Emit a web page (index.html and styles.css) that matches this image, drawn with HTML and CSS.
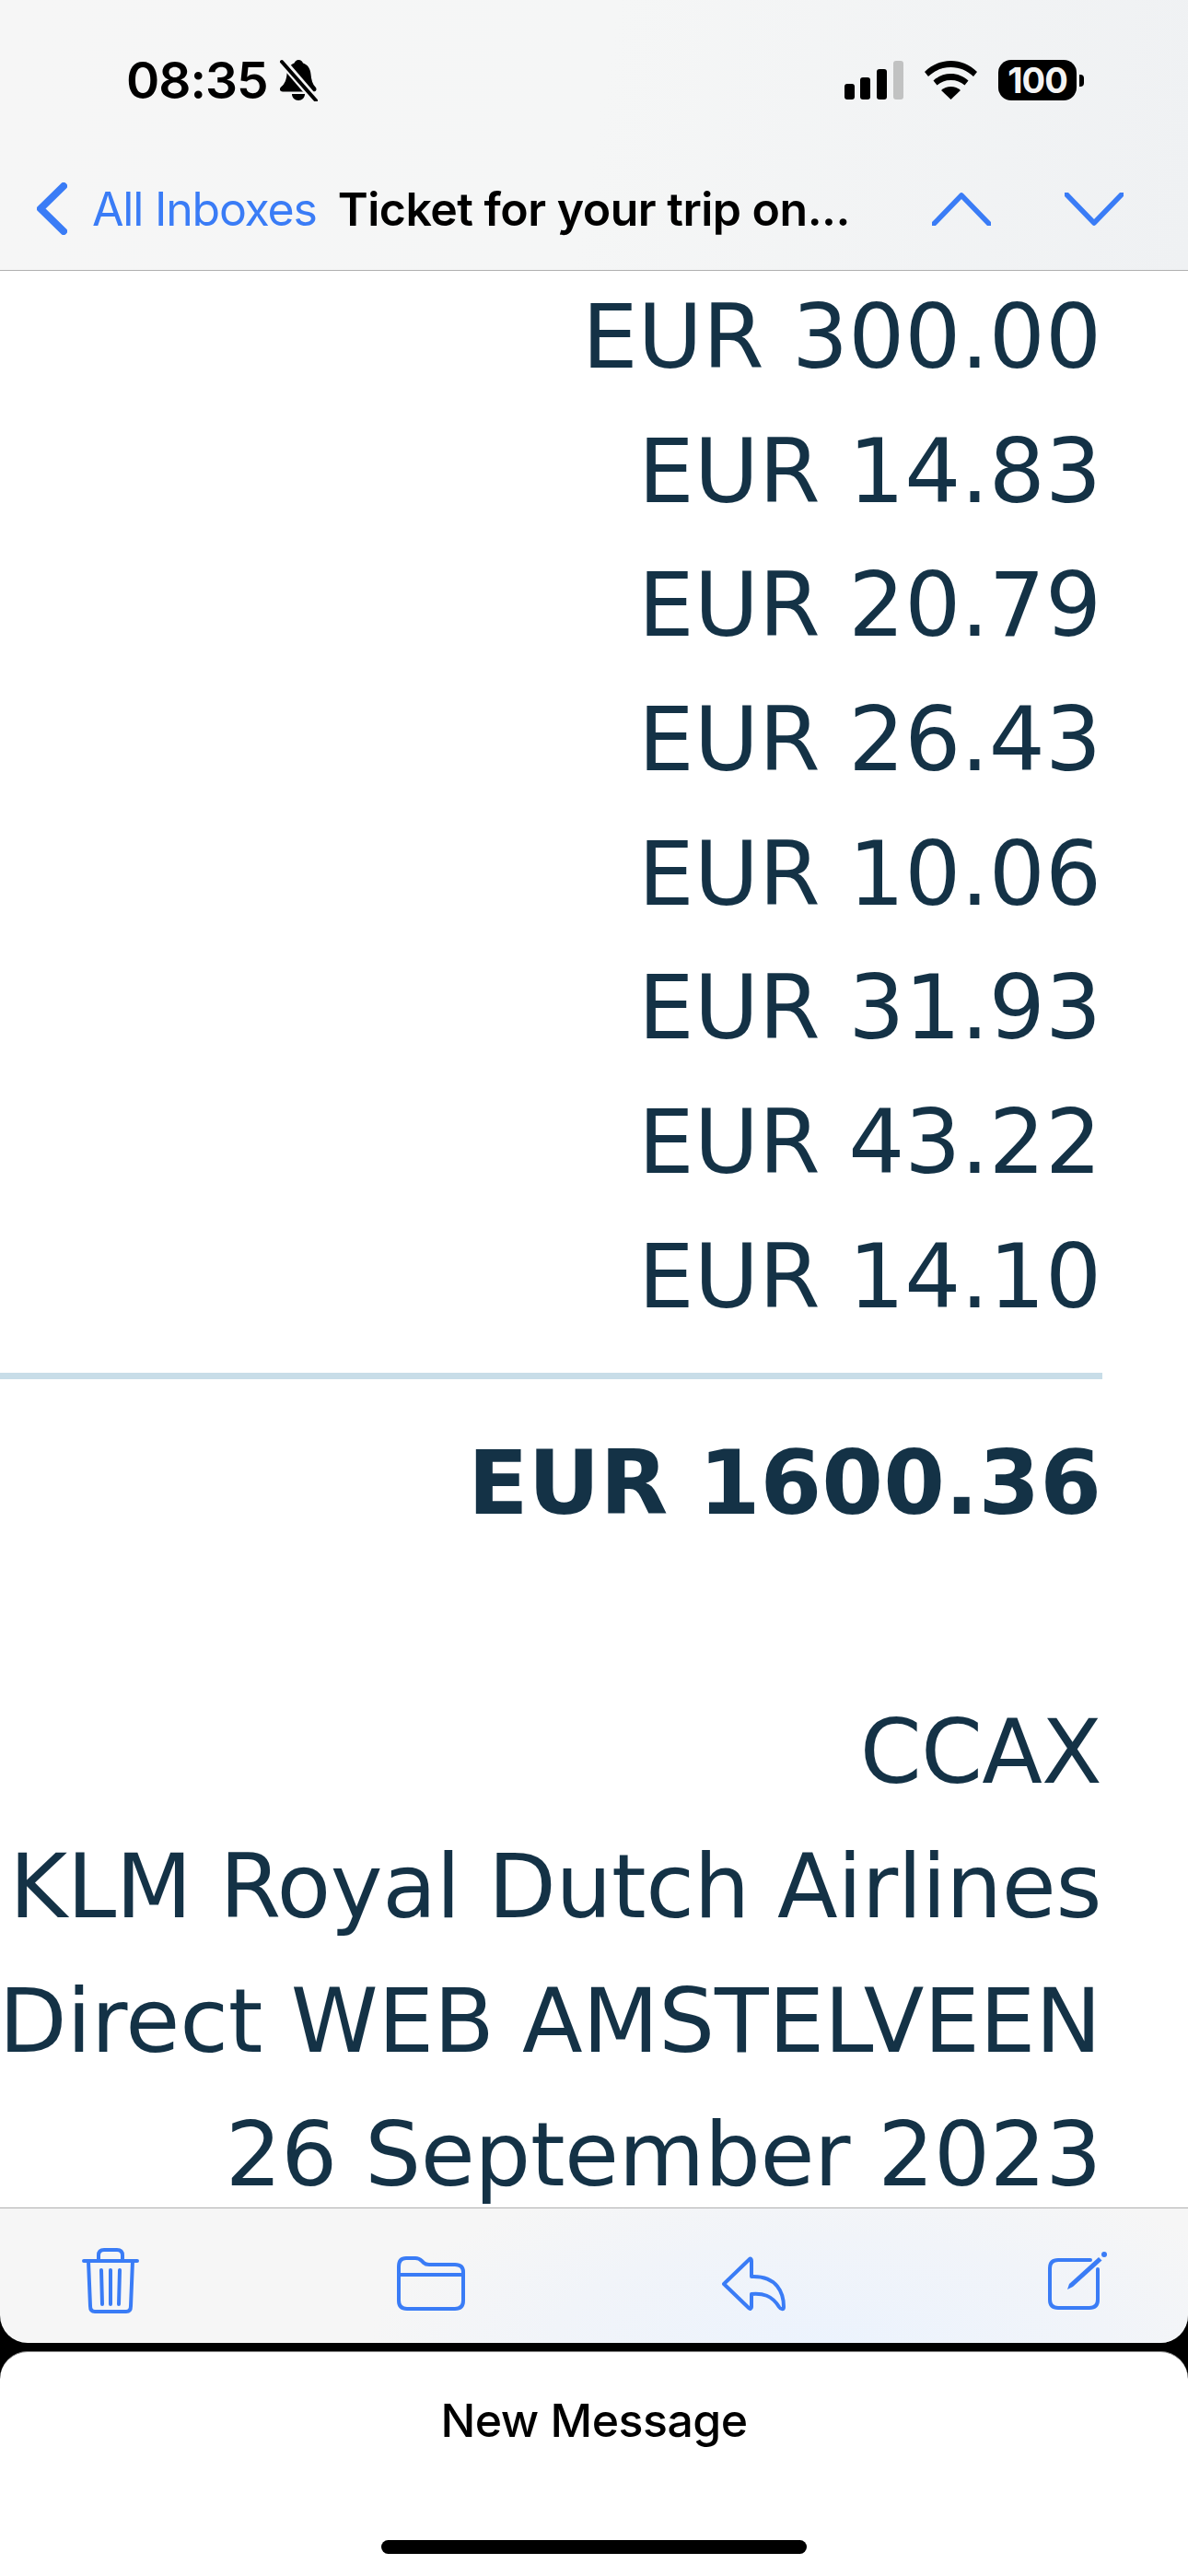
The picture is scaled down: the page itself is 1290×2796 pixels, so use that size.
FILE: index.html
```html
<!DOCTYPE html>
<html lang="en">
<head>
<meta charset="utf-8">
<title>Ticket for your trip</title>
<link rel="stylesheet" href="styles.css">
</head>
<body>
<div class="phone">
  <header class="top">
    <div class="status">
      <div class="status-left">
        <span class="time">08:35</span>
        <svg class="bell" width="42" height="46" viewBox="0 0 42 46">
          <path class="solid" d="M21 1c3 0 4 1.500 5 3.500 5 1.500 8 6 8.500 12 .5 6 2 11 5 14 2 2 1 5-2 5H4c-3 0-4-3-2-5 4-3 6-8 6.500-14 .5-6 3.500-10.500 8-12 1-2 2.500-3.500 4.500-3.500z"/>
          <path class="solid" d="M14 38h14c0 4-3 7-7 7s-7-3-7-7z"/>
          <path class="gap" d="M2 1l38 44"/>
          <path class="slash" d="M3 3l37 42"/>
        </svg>
      </div>
      <div class="status-right">
        <svg width="64" height="42" viewBox="0 0 64 42">
          <rect x="0" y="25" width="11" height="17" rx="3"/>
          <rect x="17" y="18" width="11" height="24" rx="3"/>
          <rect x="35" y="9" width="11" height="33" rx="3"/>
          <rect class="dim" x="53" y="0" width="11" height="42" rx="3"/>
        </svg>
        <svg width="57" height="42" viewBox="0 0 57 42">
          <path d="M28.500 0C18 0 8 4 0 12l4 5c7-6.500 15-10 24.500-10S46 10.500 53 17l4-5C49 4 39 0 28.500 0z"/>
          <path d="M28.500 14c-7 0-13.500 2.500-19 7.500l4 5c4-3.500 9-5.500 15-5.500s11 2 15 5.500l4-5c-5.500-5-12-7.500-19-7.500z"/>
          <path d="M28.500 28c-4 0-7.500 1.300-10.500 4l10.500 10L39 32c-3-2.700-6.500-4-10.500-4z"/>
        </svg>
        <div class="battery">
          <span class="battery-body">100</span>
          <span class="battery-nub"></span>
        </div>
      </div>
    </div>
    <nav class="nav">
      <svg class="back" width="33" height="57" viewBox="0 0 33 57">
        <path d="M29 4L4 28.500 29 53"/>
      </svg>
      <span class="back-label">All Inboxes</span>
      <span class="subject">Ticket for your trip on...</span>
      <div class="arrows">
        <svg class="chev" width="64" height="36" viewBox="0 0 64 36"><path d="M2 34L32 3l30 31"/></svg>
        <svg class="chev" width="64" height="36" viewBox="0 0 64 36"><path d="M2 2l30 31L62 2"/></svg>
      </div>
    </nav>
  </header>

  <main class="mail">
    <div class="row">EUR 300.00</div>
    <div class="row">EUR 14.83</div>
    <div class="row">EUR 20.79</div>
    <div class="row">EUR 26.43</div>
    <div class="row">EUR 10.06</div>
    <div class="row">EUR 31.93</div>
    <div class="row">EUR 43.22</div>
    <div class="row">EUR 14.10</div>
    <div class="rule"></div>
    <div class="row total">EUR 1600.36</div>
    <div class="row spacer"></div>
    <div class="row code">CCAX</div>
    <div class="row snug">KLM Royal Dutch Airlines</div>
    <div class="row wide">Direct WEB AMSTELVEEN</div>
    <div class="row snug">26 September 2023</div>
  </main>

  <footer class="tools">
    <svg class="tool" width="62" height="71" viewBox="0 0 62 71">
      <path d="M2 14h58M18 13V8c0-4 2-6 6-6h14c4 0 6 2 6 6v5M7 14l2 49c0 4 2 6 5 6h34c3 0 5-2 5-6l2-49M21 24l1 37M31 24v37M41 24l-1 37"/>
    </svg>
    <svg class="tool" width="74" height="68" viewBox="0 -8 74 68">
      <path d="M2 12c0-6 3-9 8-9h10c3 0 5 1 7 3l2 2c1.500 1.500 3 2 6 2h28c6 0 9 3 9 8v31c0 6-3 9-9 9H11c-6 0-9-3-9-9V12zM2 21h70"/>
    </svg>
    <svg class="tool" width="70" height="69" viewBox="0 -9 70 69">
      <path d="M30 3L2 30l27 26c1.500 1.500 3 1 3-1V41c12-1 22 1 30 14 2 3 5 3 5 0 0-15-7-34-35-33V5c0-2-1-3-2-2z"/>
    </svg>
    <svg class="tool" width="68" height="67" viewBox="-4 0 68 67">
      <path d="M46 13H11c-6 0-9 3-9 9v34c0 6 3 9 9 9h34c6 0 9-3 9-9V23"/>
      <path class="pen" d="M21 45l2-6L55 10l3.500 3.500L27 42z"/>
      <circle class="pen" cx="61" cy="7" r="3"/>
    </svg>
  </footer>

  <section class="sheet">
    <div class="sheet-title">New Message</div>
    <div class="home-bar"></div>
  </section>
</div>
</body>
</html>
```
FILE: styles.css
```css
* { box-sizing: border-box; }
html, body { margin: 0; padding: 0; background: #000; }
.phone {
  width: 1290px;
  height: 2796px;
  display: flex;
  flex-direction: column;
  overflow: hidden;
  font-family: Inter, "Liberation Sans", sans-serif;
  background: #000;
}

/* top bars */
.top {
  height: 294px;
  flex: none;
  display: flex;
  flex-direction: column;
  background: linear-gradient(100deg, #f6f6f6 0%, #f5f6f6 50%, #eff1f3 100%);
  border-bottom: 1px solid #b0b0b0;
}
.status {
  height: 46px;
  margin-top: 64px;
  padding: 0 113px 0 137px;
  display: flex;
  align-items: center;
  justify-content: space-between;
  flex: none;
}
.status-left { display: flex; align-items: center; gap: 12px; }
.time { font-size: 55px; font-weight: 600; line-height: 46px; color: #000; letter-spacing: -1px; }
.bell .solid { fill: #000; }
.bell .gap { stroke: #f5f5f5; stroke-width: 9; fill: none; }
.bell .slash { stroke: #000; stroke-width: 4; stroke-linecap: round; fill: none; }
.status-right { display: flex; align-items: center; gap: 23px; }
.status-right svg { fill: #000; display: block; }
.status-right .dim { fill: #c1c2c2; }
.battery { display: flex; align-items: center; gap: 3px; }
.battery-body {
  width: 85px;
  height: 44px;
  border-radius: 14px;
  background: #000;
  color: #f4f4f4;
  font-size: 38px;
  font-weight: 700;
  line-height: 44px;
  text-align: center;
  letter-spacing: -1px;
}
.battery-nub { width: 5px; height: 13px; background: #000; border-radius: 0 4px 4px 0; }

.nav {
  margin-top: 88px;
  padding: 0 70px 0 40px;
  height: 57px;
  display: flex;
  align-items: center;
  flex: none;
}
.back { fill: none; stroke: #3a7cf6; stroke-width: 8; stroke-linecap: round; stroke-linejoin: round; flex: none; }
.back-label { margin-left: 27px; font-size: 50px; font-weight: 400; color: #3a7cf6; letter-spacing: -1.200px; white-space: nowrap; }
.subject { margin-left: 23px; font-size: 50px; font-weight: 600; color: #000; letter-spacing: -0.500px; white-space: nowrap; }
.arrows { margin-left: auto; display: flex; gap: 80px; }
.chev { fill: none; stroke: #3a7cf6; stroke-width: 5.500; stroke-linecap: round; stroke-linejoin: round; display: block; }

/* message body */
.mail {
  flex: 1;
  min-height: 0;
  overflow: hidden;
  background: #fff;
  padding-right: 94px;
  color: #143246;
  font-family: "DejaVu Sans", Verdana, sans-serif;
  font-size: 96px;
}
.row {
  height: 145.700px;
  line-height: 144px;
  display: flex;
  justify-content: flex-end;
  white-space: nowrap;
}
.rule { height: 7px; margin: 30px -1px 41px 0; background: #c8dde8; }
.total { font-weight: 700; }
.spacer { height: 147px; }
.snug { letter-spacing: -0.400px; }
.code { letter-spacing: -0.800px; }
.wide { letter-spacing: -0.150px; }

/* toolbar */
.tools {
  height: 147px;
  flex: none;
  padding: 43px 88px 0 89px;
  display: flex;
  justify-content: space-between;
  align-items: flex-start;
  background: radial-gradient(ellipse 500px 200px at 900px 150px, #ecf3fd 0%, #f1f4f9 60%, rgba(245,246,247,0) 100%), #f6f6f6;
  border-top: 1px solid #b0b0b0;
  border-radius: 0 0 30px 30px;
}
.tool { fill: none; stroke: #3a7cf6; stroke-width: 4; stroke-linecap: round; stroke-linejoin: round; display: block; }
.tool .pen { fill: #3a7cf6; stroke: none; }

/* sheet */
.sheet {
  margin-top: 9px;
  height: 244px;
  flex: none;
  background: #fff;
  border-top: 1px solid #8a8a8a;
  border-radius: 30px 30px 0 0;
  display: flex;
  flex-direction: column;
  align-items: center;
}
.sheet-title { margin-top: 45px; font-size: 50px; font-weight: 500; line-height: 58px; color: #000; letter-spacing: -0.500px; }
.home-bar { margin-top: 101px; width: 462px; height: 15px; border-radius: 8px; background: #000; }
```
